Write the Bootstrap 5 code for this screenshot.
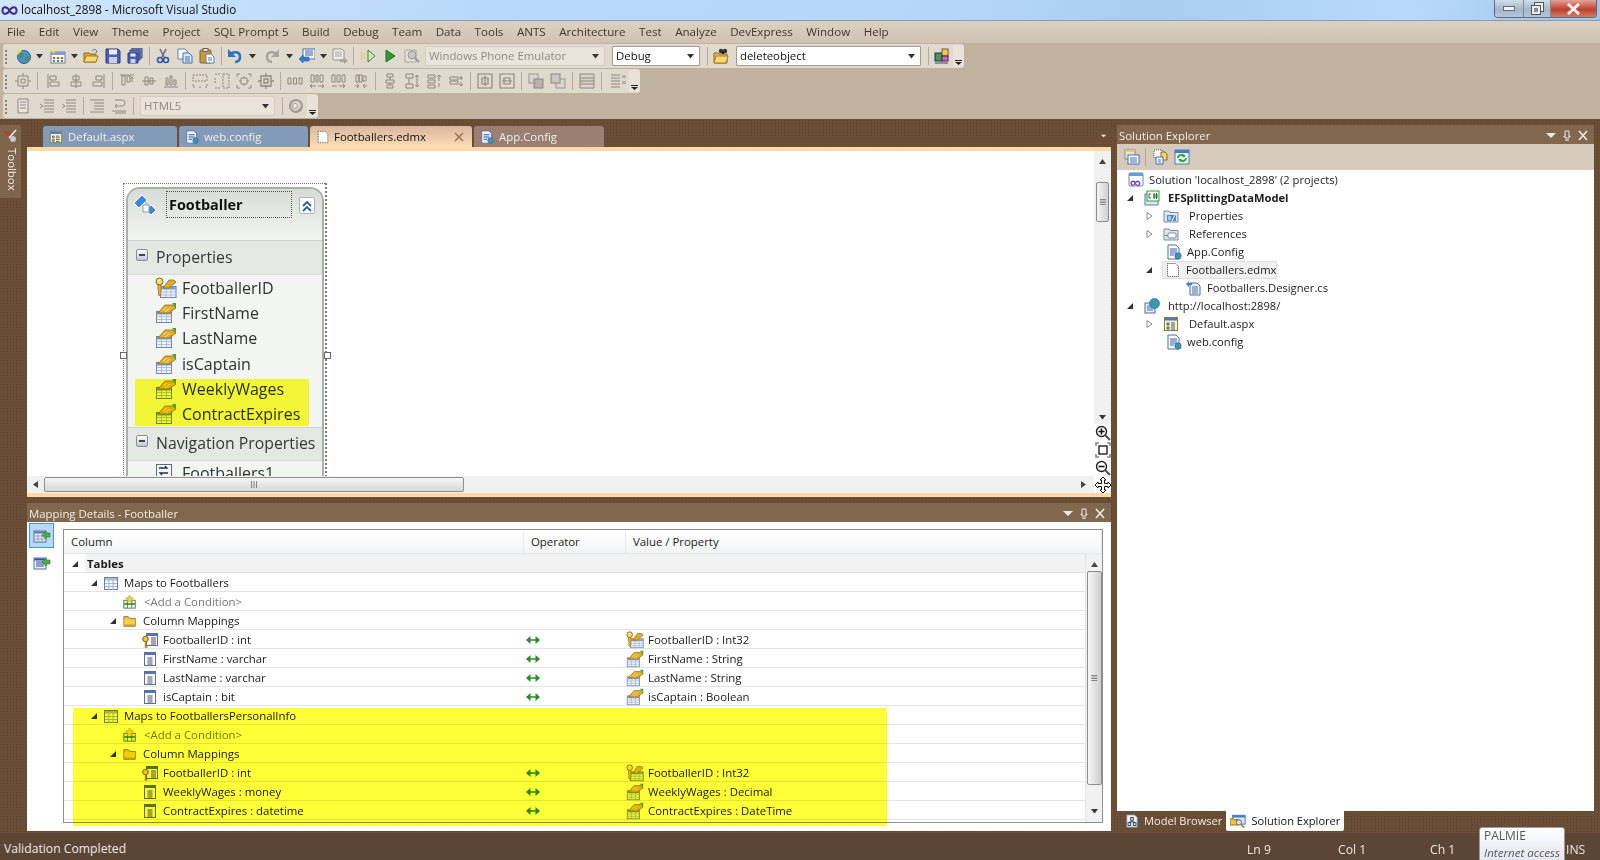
<!DOCTYPE html>
<html lang="en">
<head>
<meta charset="UTF-8">
<title>localhost_2898 - Microsoft Visual Studio</title>
<link href="https://cdn.jsdelivr.net/npm/bootstrap@5.3.0/dist/css/bootstrap.min.css" rel="stylesheet">
<style>
html, body { margin: 0; height: 860px; overflow: hidden; }
body { width: 1600px; font-family: "Open Sans", "Liberation Sans", sans-serif; font-size: 11.4px; line-height: 1; color: #111; background: #6a4e36; }
.dots { background-color: #6a4e36; background-image: radial-gradient(#5c432e 0.8px, transparent 0.9px); background-size: 3px 3px; }
svg { display: block; flex: none; }
.i16 { width: 16px; height: 16px; }
.i18 { width: 18px; height: 18px; }
.i14 { width: 14px; height: 14px; }
.i22 { width: 22px; height: 22px; }
.tri { width: 8px; height: 8px; }
.g { fill: none; stroke: #8d8880; stroke-width: 1; }

/* title + menu */
.titlebar { height: 21px; background: linear-gradient(100deg, #cfe5fb 0, #b9d9fa 30%, #b5d6f8 60%, #a9cdef 72%, #b8d9fb 88%, #9fc4e6 100%); border-bottom: 1px solid #8c9aa8; font-size: 11.7px; padding-left: 21px; position: relative; color: #101010; }
.vslogo { position: absolute; left: 1px; top: 6px; width: 17px; height: 9px; }
.winbtns { position: absolute; left: 1494px; top: 0; width: 103px; height: 18px; border: 1px solid #5d6b7a; border-top: 0; border-radius: 0 0 4px 4px; overflow: hidden; }
.winbtns > div { height: 100%; }
.wb-min { width: 29px; background: linear-gradient(#d2deea, #a3b6ca 55%, #b4c5d6); border-right: 1px solid #7b8a99; }
.wb-res { width: 27px; background: linear-gradient(#d2deea, #a3b6ca 55%, #b4c5d6); border-right: 1px solid #7b8a99; }
.wb-cls { flex: 1; background: linear-gradient(#e2a599, #c2402c 55%, #cf7a69); }
.menubar { height: 22px; background: linear-gradient(#dcd1c4, #cfc2b3); color: #43352a; font-size: 11.6px; padding-left: 7px; gap: 13.5px; }

/* toolbars */
.toolarea { height: 76px; background: #c1b2a0; padding: 1px 0 0 3px; }
.bar { height: 24px; margin-bottom: 1px; background: #e0d9ce; border-radius: 3px; width: max-content; }
.grip { width: 8px; height: 16px; background-image: radial-gradient(#8a8073 1px, transparent 1.1px); background-size: 4px 4px; background-position: 0 1px; background-repeat: repeat-y; margin-left: 1px; }
.tb { width: 22px; height: 22px; justify-content: center; }
.dd { width: 11px; }
.dd svg, .ov svg { width: 7px; height: 5px; }
.ddw { width: 13px; }
.sep { width: 6px; display: flex; justify-content: center; }
.sep::before { content: ""; width: 1px; height: 18px; background: #b4aa9c; }
.sepn { width: 4px; }
.bar2 .sep { width: 7px; }
.ov { width: 11px; height: 22px; justify-content: center; align-items: flex-end !important; padding-bottom: 2px; background: #e8e2d9; border-radius: 0 3px 3px 0; }
.combo { height: 20px; background: #e9e3da; border: 1px solid #d3cbbf; color: #8f8a83; font-size: 11.4px; padding: 0 5px 0 3px; border-radius: 1px; }
.combo.on { background: #fff; border-color: #a99c8c; color: #111; }
.w180 { width: 180px; } .w90 { width: 88px; } .w185 { width: 185px; } .w135 { width: 135px; }
.ms2px { margin-left: 2px; } .ms7px { margin-left: 7px; }

/* workspace */
.workspace { height: 714px; }
.toolbox { width: 27px; padding-top: 6px; }
.toolbox-tab { width: 21px; height: 73px; background: #7e654b; border-radius: 0 2px 2px 0; color: #f1ece6; }
.toolbox-tab span { writing-mode: vertical-rl; font-size: 11.4px; margin-top: 5px; margin-left: 3px; }
.center { width: 1084px; }
.tabstrip { height: 28px; padding: 7px 0 0 16px; gap: 2px; position: relative; }
.doctab { height: 21px; border-radius: 3px 3px 0 0; color: #f3efea; font-size: 11.4px; padding-left: 6px; gap: 5px; }
.t-blue { background: #839ab9; }
.t-peach { background: linear-gradient(#d9b6a0, #fcdcb4); color: #111; }
.t-mauve { background: #9b7f73; }
.w134 { width: 134px; } .w129 { width: 129px; } .w162 { width: 162px; } .w130 { width: 130px; }
.tabmenu { position: absolute; left: 1072px; top: 14px; }
.docpane { height: 350px; border-top: 4px solid #fcd9a8; border-bottom: 4px solid #fcd9a8; background: #fff; overflow: hidden; }
.canvas { flex: 1; position: relative; overflow: hidden; }
.vscroll { width: 17px; background: #f0f0f0; }
.hscroll { height: 17px; background: #f1f1f1; padding: 0 8px 0 6px; flex: none; }
.thumb-h { width: 420px; height: 15px; margin-left: 6px; background: linear-gradient(#f6f6f6, #d7d7d7); border: 1px solid #8e8e8e; border-radius: 2px; font-size: 9px; color: #666; text-align: center; line-height: 13px; }
.thumb-v { background: linear-gradient(90deg, #f6f6f6, #cfcfd1); border: 1px solid #8c8c8c; border-radius: 2px; font-size: 12px; color: #666; }
.thumb-doc { width: 13px; height: 40px; margin-top: 18px; }
.thumb-map { width: 15px; height: 214px; margin-top: 4px; }
.zoomcol { width: 17px; height: 69px; background: #fff; padding-top: 1px; gap: 1.400px; }

/* entity on the designer canvas */
.entity { position: absolute; left: 99px; top: 36px; width: 198px; height: 340px; background: #f2f5f1; border: 2px solid #a8b0a8; border-radius: 14px 14px 0 0; }
.selbox { position: absolute; left: 96px; top: 32px; width: 204px; height: 330px; border: 1px dotted #777; border-right-width: 2px; }
.handle { position: absolute; width: 7px; height: 7px; background: #fff; border: 1px solid #666; top: 201px; }
.handle-l { left: 93px; } .handle-r { left: 297px; }
.ent-head { height: 52px; background: linear-gradient(#d6ddd5, #f3f5f2); border-bottom: 1px solid #c9d1c9; border-radius: 12px 12px 0 0; position: relative; }
.ent-name { position: absolute; left: 38px; top: 2px; width: 126px; height: 27px; border: 1px dotted #555; font-size: 14.4px; font-weight: 700; padding: 6px 2px; color: #111; }
.ent-icon { position: absolute; left: 6px; top: 5px; }
.ent-coll { position: absolute; left: 171px; top: 8px; width: 16px; height: 17px; border: 1px solid #a8b4c8; border-radius: 2px; background: #fff; }
.ent-sec { height: 34px; background: #e3e9e2; border-bottom: 1px solid #d7ddd6; font-size: 15.8px; padding: 0 0 0 8px; gap: 8px; color: #33383a; }
.ent-sec.b { border-top: 1px solid #c9d1c9; }
.minus { width: 12px; height: 12px; border: 1px solid #8c8f95; border-radius: 2px; background: linear-gradient(#fff, #bfc4cc); margin-top: -5px; position: relative; }
.minus::after { content: ""; position: absolute; left: 2px; right: 2px; top: 4px; height: 2px; background: #444; }
.ent-row { height: 25.3px; padding-left: 27px; gap: 5px; font-size: 16px; color: #2e3234; }
.hl { position: absolute; background: #ffff38; mix-blend-mode: multiply; pointer-events: none; }
.hl-ent { left: 108px; top: 228px; width: 174px; height: 47px; }

/* docked tool windows */
.gapv { height: 6px; }
.paneltitle { height: 19px; background: #80674d; color: #f3ede6; font-size: 11.4px; padding: 2px 6px 0 2px; }
.paneltitle .ctl { gap: 6px; }
.paneltitle .ctl svg { width: 10px; height: 11px; }
.mapbody { height: 309px; background: #fff; padding: 7px 8px 8px 0; position: relative; }
.mapside { width: 36px; padding-left: 2px; margin-top: -6px; }
.sidebtn { width: 25px; height: 25px; justify-content: center; }
.sidebtn.on { background: #b8d9f6; border: 1px solid #3d97e3; }
.sidebtn.sec { margin-top: 2px; }
.grid { width: 1040px; height: 294px; border: 1px solid #8f8f8f; }
.ghead { height: 24px; background: linear-gradient(#fff 15%, #f3f4f6); border-bottom: 1px solid #e6e6e6; color: #222; font-size: 11.4px; padding-top: 1px; }
.ghead > div { padding-left: 7px; height: 100%; border-right: 1px solid #e8e8e8; }
.c1 { width: 460px; } .c2 { width: 102px; } .c3 { flex: 1; }
.gbody { height: 269px; }
.grows { flex: 1; overflow: hidden; }
.gscroll { width: 17px; background: #f1f1f1; border-left: 1px solid #e4e4e4; }
.grow { height: 19px; border-bottom: 1px solid #e4e4e4; color: #1a1a1a; padding-top: 2px; }
.cell1 { width: 460px; height: 100%; gap: 5px; }
.cell2 { width: 102px; padding-left: 1px; }
.cell3 { gap: 4px; }
.exp { width: 8px; height: 8px; }
.lv0 { padding-left: 7px; font-weight: 700; }
.lv0 .lbl { margin-left: 3px; }
.grow.tables { background: linear-gradient(90deg, #fff 21px, #f2f2f2 21px); }
.lv1 { padding-left: 26px; }
.lv2 { padding-left: 45px; gap: 6px; }
.lv2 .i14 { margin-left: 0; }
.lv2b { padding-left: 59px; gap: 7px; }
.lv3 { padding-left: 78px; }
.muted { color: #777; }
.hl-map { left: 46px; top: 186px; width: 814px; height: 118px; }

/* solution explorer */
.solution { width: 477px; margin-left: 6px; margin-top: 6px; }
.setools { height: 26px; background: #d6cabd; padding-left: 4px; }
.setools .tb { width: 21px; }
.setree { height: 641px; background: #fff; padding-top: 1px; }
.tr { height: 18px; gap: 5px; color: #1c1c1c; font-size: 11.2px; }
.t0 { padding-left: 11px; }
.t1 { padding-left: 9px; gap: 10px; }
.t1 > span { margin-left: -2px; }
.t2 { padding-left: 28px; gap: 10px; }
.t2n { padding-left: 49px; }
.t3 { padding-left: 69px; }
.picked { background: #f0f0f0; border: 1px solid #dedede; border-radius: 2px; height: 18px; padding: 0 3px 0 2px; width: 115px; margin-left: -1px; gap: 5px; }
.bottomtabs { height: 20px; }
.btab { height: 20px; padding: 0 4px; gap: 5px; color: #f3ede6; font-size: 11.1px; border-radius: 0 0 2px 2px; }
.btab.on { background: #fff; color: #111; }

/* status */
.statusbar { height: 27px; background: #5c4535; color: #efe9e2; font-size: 12.2px; position: relative; padding-left: 4px; padding-top: 10px; }
.stat { position: absolute; top: 11px; }
.st-ln { left: 1247px; } .st-col { left: 1338px; } .st-ch { left: 1430px; } .st-ins { left: 1566px; }
.net { position: absolute; left: 1479px; top: -6px; width: 86px; height: 40px; background: linear-gradient(#fff, #dfe3ef); border: 1px solid #9a9a9a; border-radius: 3px; padding: 2px 4px; color: #575757; font-size: 12px; }
.net i { display: block; margin-top: 5px; white-space: nowrap; font-size: 11.6px; }
</style>
</head>
<body>

<svg width="0" height="0" class="position-absolute">
  <defs>
    <symbol id="exp" viewBox="0 0 8 8"><path d="M7 1v6H1z" fill="#333"/></symbol>
    <symbol id="col" viewBox="0 0 8 8"><path d="M2 0.5l5 3.5-5 3.5z" fill="#fff" stroke="#8a8a8a"/></symbol>
    <symbol id="down" viewBox="0 0 7 5"><path d="M0 0h7L3.5 4.5z" fill="#333"/></symbol>
    <symbol id="ovf" viewBox="0 0 7 5"><path d="M0 0h7v1H0zM0 2h7L3.5 5z" fill="#222"/></symbol>
    <symbol id="pdown" viewBox="0 0 10 11"><path d="M0 3h10L5 8z" fill="#efe9e1"/></symbol>
    <symbol id="pin" viewBox="0 0 10 11"><path d="M3 1h4v5h1v1H6v4H4V7H2V6h1z" fill="none" stroke="#efe9e1"/></symbol>
    <symbol id="pclose" viewBox="0 0 10 11"><path d="M1 1l8 9M9 1l-8 9" stroke="#efe9e1" stroke-width="1.6"/></symbol>

    <!-- coloured toolbar icons -->
    <symbol id="globe" viewBox="0 0 16 16"><circle cx="9" cy="9" r="6.5" fill="#4a8fd6" stroke="#2e5f94"/><path d="M5 5c3-1 4 1 3 3s-3 1-4 3M10 9c2-1 4 0 4 1s-2 4-3 3-2-3-1-4z" fill="#3f9a3a"/><path d="M3.5 0l1 2.5L7 3.5 4.5 4.5l-1 2.5-1-2.5L0 3.5l2.5-1z" fill="#f6dd4a"/></symbol>
    <symbol id="additem" viewBox="0 0 16 16"><rect x="1" y="4" width="14" height="11" fill="#fff" stroke="#6a7fa0"/><path d="M1 4h14v3H1z" fill="#7da0cf"/><path d="M3 9h2v2H3zM7 9h2v2H7zM11 9h2v2h-2z" fill="#d6433a"/><path d="M3 12h2v2H3zM7 12h2v2H7zM11 12h2v2h-2z" fill="#3e9a4a"/><path d="M3.5 0l1 2L7 3 4.5 4l-1 2-1-2L0 3l2.5-1z" fill="#f6dd4a"/></symbol>
    <symbol id="open" viewBox="0 0 16 16"><path d="M1 5h5l1 1h6v8H1z" fill="#d9a93a" stroke="#8c6a1a"/><path d="M3 8h12l-2 6H1z" fill="#f5d778" stroke="#a47f22"/><path d="M9 3c2-2 3-2 5 0l-1 2" fill="none" stroke="#2e6db5"/></symbol>
    <symbol id="save" viewBox="0 0 16 16"><path d="M1 1h12l2 2v12H1z" fill="#4a5fb0" stroke="#2a3a7c"/><rect x="4" y="1.500" width="8" height="5" fill="#e8eefc"/><rect x="4" y="9" width="8" height="6" fill="#c8d0e6"/></symbol>
    <symbol id="saveall" viewBox="0 0 16 16"><path d="M5 0h10v10H5z" fill="#7d8cc6" stroke="#3a4a8a"/><path d="M3 2h10v10H3z" fill="#5d70b8" stroke="#3a4a8a"/><path d="M1 5h10v10H1z" fill="#4a5fb0" stroke="#2a3a7c"/><rect x="3.500" y="5.500" width="5" height="3" fill="#e8eefc"/><rect x="3.500" y="11" width="5" height="4" fill="#c8d0e6"/></symbol>
    <symbol id="cut" viewBox="0 0 16 16"><path d="M5 1l4 8M11 1L7 9" stroke="#667" stroke-width="1.500"/><circle cx="5" cy="12" r="2.500" fill="none" stroke="#2f57a8" stroke-width="1.600"/><circle cx="11" cy="12" r="2.500" fill="none" stroke="#2f57a8" stroke-width="1.600"/></symbol>
    <symbol id="copy" viewBox="0 0 16 16"><path d="M1 1h7l2 2v8H1z" fill="#fff" stroke="#5a7cae"/><path d="M6 5h6l3 3v7H6z" fill="#dbe8f8" stroke="#4a6ea4"/><path d="M8 9h5M8 11h5M8 13h5" stroke="#4a6ea4"/></symbol>
    <symbol id="paste" viewBox="0 0 16 16"><rect x="1" y="2" width="11" height="13" rx="1" fill="#c99a3a" stroke="#80601c"/><rect x="4" y="0.500" width="5" height="3" fill="#ddd" stroke="#666"/><path d="M7 6h5l3 3v6H7z" fill="#fff" stroke="#5a7cae"/><path d="M9 10h4M9 12h4" stroke="#5a7cae"/></symbol>
    <symbol id="undo" viewBox="0 0 16 16"><path d="M3 7c3-4 10-4 10 2 0 3-2 5-5 5" fill="none" stroke="#2f6fc0" stroke-width="2.600"/><path d="M1 1v8h8z" fill="#2f6fc0"/></symbol>
    <symbol id="redo" viewBox="0 0 16 16"><path d="M13 7C10 3 3 3 3 9c0 3 2 5 5 5" fill="none" stroke="#a8a49d" stroke-width="2.400"/><path d="M15 1v8H7z" fill="#a8a49d"/></symbol>
    <symbol id="nav" viewBox="0 0 16 16"><rect x="4" y="1" width="12" height="10" fill="#fff" stroke="#3f6fb0"/><path d="M6 3h8M6 5h8M6 7h8" stroke="#2f57a8"/><path d="M0 11l4-4v2h6v4H4v2z" fill="#2f7fd0" stroke="#1f5a9c" stroke-width=".6"/></symbol>
    <symbol id="findg" viewBox="0 0 16 16"><path d="M1 1h9l2 2v9H1z" fill="#eee" stroke="#9a968f"/><path d="M3 4h7M3 6h7M3 8h7" stroke="#aaa69f"/><path d="M8 11h4V9l4 4-4 3v-2H8z" fill="#aaa69f"/></symbol>
    <symbol id="rundash" viewBox="0 0 16 16"><path d="M8 2l7 6-7 6z" fill="#d5e8c6" stroke="#2f8a2f"/><path d="M0 5h2M0 8h4M0 11h2M3 6h3M3 10h3" stroke="#d9c94a"/></symbol>
    <symbol id="play" viewBox="0 0 16 16"><path d="M4 2l9 6-9 6z" fill="#2f9a2f" stroke="#1e6f1e"/></symbol>
    <symbol id="attach" viewBox="0 0 16 16"><rect x="1" y="2" width="11" height="12" fill="#e4e0d9" stroke="#aaa59d"/><circle cx="8" cy="7" r="4" fill="#c9c6c0" stroke="#999"/><path d="M11 10l4 4" stroke="#999" stroke-width="2"/></symbol>
    <symbol id="findfiles" viewBox="0 0 16 16"><path d="M1 5h4l1 1h8v9H1z" fill="#e6bd55" stroke="#8c6a1a"/><path d="M3 8h12l-2 7H1z" fill="#f5d778" stroke="#a47f22"/><circle cx="8" cy="3" r="2.200" fill="#333"/><circle cx="12" cy="3" r="2.200" fill="#333"/><path d="M8 4l2 2 2-2" stroke="#333"/></symbol>
    <symbol id="layout" viewBox="0 0 16 16"><rect x="1" y="5" width="7" height="8" fill="#3f9a5a" stroke="#235"/><rect x="8" y="1" width="6" height="7" fill="#f0d03a" stroke="#654"/><rect x="8" y="8" width="6" height="5" fill="#d860c8" stroke="#424"/><path d="M1 15h13" stroke="#777" stroke-width="1.500"/></symbol>
    <symbol id="gear" viewBox="0 0 16 16"><circle cx="8" cy="8" r="6" fill="#dcd7cf" stroke="#9e9a93" stroke-width="2"/><circle cx="7" cy="8" r="2.500" fill="#efebe5" stroke="#9e9a93"/><path d="M9 14l5-5" stroke="#9e9a93" stroke-width="2"/></symbol>

    <!-- entity and grid icons -->
    <symbol id="prop" viewBox="0 0 22 22"><rect x="1.500" y="9.500" width="15" height="11" fill="#eef3fb" stroke="#6f87ad"/><path d="M2 10h14v2.500H2z" fill="#7da2d2"/><path d="M1.500 14.500h15M1.500 17.500h15M6.500 12v8M11.500 12v8" stroke="#9fb2ce" stroke-width=".8"/><path d="M3 11l7-8h8l3 3-7 5z" fill="#e0ae2a" stroke="#8b6a14" stroke-width=".8"/><path d="M8 8l4-3M10 10l5-4" stroke="#f8e08a"/><path d="M17 1h4v5z" fill="#3da53a"/></symbol>
    <symbol id="keyprop" viewBox="0 0 22 22"><rect x="5.500" y="9.500" width="15.500" height="11" fill="#eef3fb" stroke="#6f87ad"/><path d="M6 10h15v2.500H6z" fill="#7da2d2"/><path d="M6 15h15M6 18h15M11 12v8M16 12v8" stroke="#9fb2ce" stroke-width=".8"/><path d="M8 11l6-8h5l2 2-7 6z" fill="#e0ae2a" stroke="#8b6a14" stroke-width=".8"/><circle cx="4.500" cy="4.500" r="3.500" fill="#f4d862" stroke="#8b6a14"/><circle cx="4" cy="3.500" r="1" fill="#fff"/><path d="M3 8h3v9l-1.500 2L3 17l1-1-1-1 1-1-1-1z" fill="#e8bc3a" stroke="#8b6a14" stroke-width=".8"/></symbol>
    <symbol id="footnav" viewBox="0 0 22 22"><rect x="1.500" y="2.500" width="15" height="15" fill="#f6f8fb" stroke="#5a6b88"/><path d="M4 6h8l-2-2M13 11H5l2 2" fill="none" stroke="#234" stroke-width="1.300"/><path d="M14 15a4 4 0 1 0 5 5" fill="none" stroke="#2f7fd0" stroke-width="1.600"/></symbol>
    <symbol id="entity" viewBox="0 0 22 22"><path d="M0 9l8-8 5 5-8 8z" fill="#3f86d8" stroke="#fff"/><path d="M12 16l5-5 5 5-5 5z" fill="#3f86d8" stroke="#fff"/><path d="M9 11h6v7H9z" fill="#fff" stroke="#8a9aa8"/><path d="M11 7l3 3h-3z" fill="#9ac2ec"/></symbol>
    <symbol id="chev" viewBox="0 0 14 14"><path d="M3 7l4-4 4 4M3 12l4-4 4 4" fill="none" stroke="#2c5aa0" stroke-width="1.800"/></symbol>
    <symbol id="maptbl" viewBox="0 0 16 16"><rect x="1.500" y="2.500" width="13" height="12" fill="#f4f7fc" stroke="#6b7fa0"/><path d="M2 3h12v2.500H2z" fill="#a6bcd9"/><path d="M2 8.500h12M2 11.500h12M5.800 5v10M10 5v10" stroke="#a6b6cf"/></symbol>
    <symbol id="cond" viewBox="0 0 16 16"><rect x="1" y="6" width="13" height="9" fill="#fff" stroke="#4a6a4a"/><path d="M1 9h13v2.500H1z" fill="#42b042"/><path d="M5 6v9M10 6v9" stroke="#4a6a4a"/><path d="M7.500 0l1.500 3 3 .5-2.200 2 .6 3-2.900-1.500-2.900 1.500.6-3-2.200-2 3-.5z" fill="#f4d53a" stroke="#a88a14" stroke-width=".6"/></symbol>
    <symbol id="folder" viewBox="0 0 16 16"><path d="M1 3h5l1.500 2H14v9H1z" fill="#eebf3a" stroke="#8c6f1c"/><path d="M1.500 6h12v7.500h-12z" fill="#f3cf4e"/><path d="M1.500 12h12v1.500h-12z" fill="#c9982a"/></symbol>
    <symbol id="column" viewBox="0 0 16 16"><rect x="2.500" y="1.500" width="11" height="13" fill="#f6f8fc" stroke="#5d6f8f"/><path d="M3 2h10v2H3z" fill="#4f78b8"/><path d="M5.500 7h5M5.500 9h5M5.500 11h5M5.500 13h5" stroke="#556"/></symbol>
    <symbol id="keycol" viewBox="0 0 16 16"><rect x="4.500" y="1.500" width="11" height="12" fill="#f6f8fc" stroke="#5d6f8f"/><path d="M5 2h10v2H5z" fill="#4f78b8"/><path d="M9 6h5M9 8h5M9 10h5M9 12h5" stroke="#556"/><circle cx="3.500" cy="7" r="2.800" fill="#eec53e" stroke="#7b5f12"/><path d="M3.500 9.500v6l2-1" fill="none" stroke="#b58d1c" stroke-width="1.400"/></symbol>
    <symbol id="arrows" viewBox="0 0 16 10"><path d="M2 5h12" stroke="#2b8a2b" stroke-width="1.500"/><path d="M5.500 1L1 5l4.500 4zM10.500 1L15 5l-4.500 4z" fill="#2b8a2b"/></symbol>
    <symbol id="sidea" viewBox="0 0 18 16"><rect x="1" y="3" width="12" height="11" fill="#eef2fa" stroke="#4f6e9c"/><path d="M1.500 3.500h11v2h-11z" fill="#4f78b8"/><path d="M1 8h12M1 11h12M5 6v8M9 6v8" stroke="#8fa3c4"/><path d="M9 7l4-4v2h4v4h-4v2z" fill="#4caf3e" stroke="#2e7a2a" stroke-width=".6"/></symbol>
    <symbol id="sideb" viewBox="0 0 18 16"><rect x="1" y="3" width="12" height="11" fill="#eef2fa" stroke="#4f6e9c"/><path d="M1.500 3.500h11v2h-11z" fill="#2e4fa8"/><path d="M3 7h8M3 9h8M3 11h8" stroke="#2e4fa8"/><path d="M9 7l4-4v2h4v4h-4v2z" fill="#4caf3e" stroke="#2e7a2a" stroke-width=".6"/></symbol>

    <!-- solution explorer icons -->
    <symbol id="sln" viewBox="0 0 16 16"><rect x="1" y="1" width="14" height="13" rx="1" fill="#fff" stroke="#6a86b0"/><path d="M1 1h14v3H1z" fill="#6f9ad4"/><path d="M4 13a2 2 0 1 1 3-2c1 2 2 3 4 2a2 2 0 1 0-3-3c-1 2-2 4-4 3z" fill="none" stroke="#6a3fb0" stroke-width="1.300"/></symbol>
    <symbol id="csproj" viewBox="0 0 16 16"><rect x="1" y="4" width="13" height="11" fill="#d9e8f5" stroke="#5a7fa8"/><rect x="3" y="1" width="12" height="10" fill="#fff" stroke="#2f9a3a"/><path d="M7 4H5v4h2M10 3v6M12.500 3v6M9 5h5M9 7h5" fill="none" stroke="#1e7a28"/></symbol>
    <symbol id="propsf" viewBox="0 0 16 16"><path d="M1 3h5l1 1.500h8V14H1z" fill="#dfe6ef" stroke="#7f8b9b"/><path d="M4 7h9v6H4z" fill="#4f8ad0"/><path d="M5 9h3M5 11h3M12 7l-3 6" stroke="#fff"/></symbol>
    <symbol id="refsf" viewBox="0 0 16 16"><path d="M1 3h5l1 1.500h8V14H1z" fill="#dfe6ef" stroke="#7f8b9b"/><rect x="5" y="7" width="8" height="5" rx="1" fill="#fff" stroke="#7c8698"/><path d="M2 9.500h3" stroke="#3a6"/></symbol>
    <symbol id="cfg" viewBox="0 0 16 16"><path d="M2 1h8l3 3v11H2z" fill="#fff" stroke="#4f6e9c"/><path d="M4 5h7M4 7h7M4 9h7M4 11h4" stroke="#2f5fa8"/><circle cx="12" cy="12" r="3.200" fill="#3c8fd8" stroke="#1f5f9c" stroke-width=".6"/><path d="M10 12c1-2 3-1 3 0s-1 1 0 3" fill="#44a83a"/></symbol>
    <symbol id="edmx" viewBox="0 0 16 16"><path d="M2.500 1.500h8l3 3v10h-11z" fill="#fff" stroke="#444" stroke-dasharray="1 1"/></symbol>
    <symbol id="designer" viewBox="0 0 16 16"><path d="M4 3h7l3 3v9H4z" fill="#eef3fb" stroke="#4f6e9c"/><path d="M6 7h6M6 9h6M6 11h6M6 13h6" stroke="#4f6e9c"/><path d="M0 4l3-3v2h3v2H3v2z" fill="#3c86d0"/></symbol>
    <symbol id="aspx" viewBox="0 0 16 16"><rect x="1.500" y="1.500" width="13" height="13" fill="#fdf4c4" stroke="#8a7a3a"/><path d="M2 2h12v2.500H2z" fill="#4f78b8"/><path d="M4 7h2v2H4zM4 11h2v2H4zM8 7h4M8 9h4M8 11h4M8 13h4" stroke="#3a5a8a" fill="none"/></symbol>
    <symbol id="webproj" viewBox="0 0 16 16"><rect x="1" y="5" width="10" height="10" fill="#e6eef8" stroke="#4f6e9c"/><path d="M3 8h6M3 10h6M3 12h6" stroke="#4f6e9c"/><circle cx="10.500" cy="5.500" r="5" fill="#3c8fd8" stroke="#1f5f9c" stroke-width=".6"/><path d="M7 4c2-2 4-1 4 1s-2 1-3 3zM12 8c1-1 3-2 3-1s-1 2-2 2z" fill="#44a83a"/></symbol>
    <symbol id="showall" viewBox="0 0 16 16"><rect x="1" y="1" width="10" height="9" fill="#e9e4da" stroke="#8c867c"/><path d="M1 1h10v2H1z" fill="#e9c87a"/><rect x="4" y="6" width="11" height="9" fill="#fff" stroke="#3f6fb0"/><path d="M6 9h7M6 11h7M6 13h7" stroke="#3f6fb0"/></symbol>
    <symbol id="nest" viewBox="0 0 16 16"><path d="M1 1h8v8H1z" fill="#fff" stroke="#555" stroke-dasharray="1 1"/><path d="M8 3h4l2 2v6H8z" fill="#f3d27a" stroke="#8a6a1a"/><path d="M3 8h7v7H3z" fill="#fff" stroke="#3f6fb0"/><path d="M5 11h3M5 13h3" stroke="#3f6fb0"/></symbol>
    <symbol id="refresh" viewBox="0 0 16 16"><rect x="1" y="1" width="14" height="14" fill="#dff0fa" stroke="#4f7fb0"/><path d="M1 1h14v3H1z" fill="#3f7fc8"/><path d="M4 9c0-3 4-4 6-2M12 9c0 3-4 4-6 2" fill="none" stroke="#3a9a2a" stroke-width="1.600"/><path d="M10 5l1.500 3L8 8zM6 13l-1.500-3L8 10z" fill="#3a9a2a"/></symbol>
    <symbol id="modelb" viewBox="0 0 16 16"><path d="M2 1h9l3 3v11H2z" fill="#f2f6fc" stroke="#6f87ad"/><rect x="6.500" y="4" width="3" height="3" fill="none" stroke="#234"/><rect x="3.500" y="10" width="3" height="3" fill="none" stroke="#234"/><rect x="9.500" y="10" width="3" height="3" fill="none" stroke="#234"/><path d="M8 7v2M5 10V9h6v1" fill="none" stroke="#234"/></symbol>
    <symbol id="solx" viewBox="0 0 18 16"><rect x="3" y="1" width="14" height="10" fill="#dbe8f8" stroke="#3f6fb0"/><path d="M3 1h14v2.500H3z" fill="#3f7fc8"/><path d="M0 5h4l1 1h4v6H0z" fill="#eec53e" stroke="#8c6a1a"/><circle cx="10" cy="9" r="3" fill="#cfe4f7" stroke="#555"/><path d="M12 11l4 4" stroke="#b08a20" stroke-width="2"/></symbol>

    <!-- designer zoom controls -->
    <symbol id="zin" viewBox="0 0 16 16"><circle cx="6.500" cy="6.500" r="5" fill="#fff" stroke="#222" stroke-width="1.400"/><path d="M3.500 6.500h6M6.500 3.500v6" stroke="#111" stroke-width="1.600"/><path d="M10 10l5 5" stroke="#555" stroke-width="2.200"/></symbol>
    <symbol id="zout" viewBox="0 0 16 16"><circle cx="6.500" cy="6.500" r="5" fill="#fff" stroke="#222" stroke-width="1.400"/><path d="M3.500 6.500h6" stroke="#111" stroke-width="1.600"/><path d="M10 10l5 5" stroke="#555" stroke-width="2.200"/></symbol>
    <symbol id="zfit" viewBox="0 0 16 16"><path d="M1 4V1h3M12 1h3v3M15 12v3h-3M4 15H1v-3" fill="none" stroke="#888" stroke-width="1.600"/><rect x="4" y="4" width="8" height="8" fill="#fff" stroke="#111" stroke-width="1.300"/></symbol>
    <symbol id="zmove" viewBox="0 0 16 16"><path d="M8 0l3 3H9.500v3.500H13V5l3 3-3 3V9.500H9.500V13H11l-3 3-3-3h1.500V9.500H3V11L0 8l3-3v1.500h3.500V3H5z" fill="#fff" stroke="#111"/></symbol>
  </defs>
</svg>

<div class="titlebar d-flex align-items-center">
  <svg class="vslogo" viewBox="0 0 17 9"><path d="M8.500 4.500C6.500 1 4 1 2.800 1.500 1 2.300 1 6.700 2.800 7.500 4 8 6.500 8 8.500 4.500 10.500 1 13 1 14.200 1.500 16 2.300 16 6.700 14.200 7.500 13 8 10.500 8 8.500 4.500z" fill="none" stroke="#3f2a86" stroke-width="2"/></svg>
  <span>localhost_2898 - Microsoft Visual Studio</span>
  <div class="winbtns d-flex">
    <div class="wb-min d-flex align-items-center justify-content-center"><svg width="12" height="5" viewBox="0 0 12 5"><rect x=".5" y=".5" width="11" height="4" fill="#f3f3f3" stroke="#5d6b7a"/></svg></div>
    <div class="wb-res d-flex align-items-center justify-content-center"><svg width="13" height="13" viewBox="0 0 13 13"><rect x="3.500" y=".5" width="9" height="9" fill="#eee" stroke="#555"/><rect x=".5" y="3.500" width="9" height="9" fill="#eee" stroke="#555"/><rect x="3" y="6" width="4" height="4" fill="#7f8b9b"/></svg></div>
    <div class="wb-cls d-flex align-items-center justify-content-center"><svg width="15" height="12" viewBox="0 0 15 12"><path d="M2 1l11 10M13 1L2 11" stroke="#f4f0ee" stroke-width="3"/></svg></div>
  </div>
</div>

<div class="menubar d-flex align-items-center">
  <span>File</span><span>Edit</span><span>View</span><span>Theme</span><span>Project</span><span>SQL Prompt 5</span><span>Build</span><span>Debug</span><span>Team</span><span>Data</span><span>Tools</span><span>ANTS</span><span>Architecture</span><span>Test</span><span>Analyze</span><span>DevExpress</span><span>Window</span><span>Help</span>
</div>

<div class="toolarea">
  <div class="bar d-flex align-items-center">
    <div class="grip"></div>
    <div class="tb d-flex align-items-center"><svg class="i16"><use href="#globe"/></svg></div>
    <div class="tb dd d-flex align-items-center"><svg><use href="#down"/></svg></div>
    <div class="tb d-flex align-items-center ms2px"><svg class="i16"><use href="#additem"/></svg></div>
    <div class="tb dd d-flex align-items-center"><svg><use href="#down"/></svg></div>
    <div class="tb d-flex align-items-center"><svg class="i16"><use href="#open"/></svg></div>
    <div class="tb d-flex align-items-center"><svg class="i16"><use href="#save"/></svg></div>
    <div class="tb d-flex align-items-center"><svg class="i16"><use href="#saveall"/></svg></div>
    <div class="sep"></div>
    <div class="tb d-flex align-items-center"><svg class="i16"><use href="#cut"/></svg></div>
    <div class="tb d-flex align-items-center"><svg class="i16"><use href="#copy"/></svg></div>
    <div class="tb d-flex align-items-center"><svg class="i16"><use href="#paste"/></svg></div>
    <div class="sep"></div>
    <div class="tb d-flex align-items-center"><svg class="i16"><use href="#undo"/></svg></div>
    <div class="tb ddw d-flex align-items-center"><svg width="7" height="5"><use href="#down"/></svg></div>
    <div class="tb d-flex align-items-center ms2px"><svg class="i16"><use href="#redo"/></svg></div>
    <div class="tb ddw d-flex align-items-center"><svg width="7" height="5"><use href="#down"/></svg></div>
    <div class="tb d-flex align-items-center"><svg class="i16"><use href="#nav"/></svg></div>
    <div class="tb dd d-flex align-items-center"><svg><use href="#down"/></svg></div>
    <div class="tb d-flex align-items-center"><svg class="i16"><use href="#findg"/></svg></div>
    <div class="sep sepn"></div>
    <div class="tb d-flex align-items-center ms2px"><svg class="i16"><use href="#rundash"/></svg></div>
    <div class="tb d-flex align-items-center"><svg class="i16"><use href="#play"/></svg></div>
    <div class="tb d-flex align-items-center"><svg class="i16"><use href="#attach"/></svg></div>
    <div class="combo w180 d-flex align-items-center justify-content-between ms2px"><span>Windows Phone Emulator</span><svg width="7" height="5"><use href="#down"/></svg></div>
    <div class="combo on w90 d-flex align-items-center justify-content-between ms7px"><span>Debug</span><svg width="7" height="5"><use href="#down"/></svg></div>
    <div class="sep ms-1"></div>
    <div class="tb d-flex align-items-center"><svg class="i16"><use href="#findfiles"/></svg></div>
    <div class="combo on w185 d-flex align-items-center justify-content-between ms-1"><span>deleteobject</span><svg width="7" height="5"><use href="#down"/></svg></div>
    <div class="sep ms-1"></div>
    <div class="tb d-flex align-items-center"><svg class="i16"><use href="#layout"/></svg></div>
    <div class="ov d-flex"><svg><use href="#ovf"/></svg></div>
  </div>

  <div class="bar bar2 d-flex align-items-center">
    <div class="grip"></div>
    <div class="tb d-flex align-items-center"><svg class="i16 g" viewBox="0 0 16 16"><path d="M3 3h10v10H3zM8 0v3M8 13v3M0 8h3M13 8h3M6 6h4v4H6z"/></svg></div>
    <div class="sep"></div>
    <div class="tb d-flex align-items-center ms2px"><svg class="i16 g" viewBox="0 0 16 16"><path d="M2 1v14M4 3h6v4H4zM4 9h9v4H4z"/></svg></div>
    <div class="tb d-flex align-items-center"><svg class="i16 g" viewBox="0 0 16 16"><path d="M8 1v14M5 3h6v4H5zM3 9h10v4H3z"/></svg></div>
    <div class="tb d-flex align-items-center"><svg class="i16 g" viewBox="0 0 16 16"><path d="M14 1v14M6 3h6v4H6zM3 9h9v4H3z"/></svg></div>
    <div class="sep"></div>
    <div class="tb d-flex align-items-center"><svg class="i16 g" viewBox="0 0 16 16"><path d="M1 2h14M3 3h3v9H3zM8 3h3v6H8zM13 9V4M11.500 5.500L13 4l1.500 1.500"/></svg></div>
    <div class="tb d-flex align-items-center"><svg class="i16 g" viewBox="0 0 16 16"><path d="M1 8h14M4 4h3v8H4zM9 5h3v6H9z"/></svg></div>
    <div class="tb d-flex align-items-center"><svg class="i16 g" viewBox="0 0 16 16"><path d="M1 14h14M3 5h2v7H3zM7 3h2v9H7zM11 7h2v5h-2z"/></svg></div>
    <div class="sep"></div>
    <div class="tb d-flex align-items-center"><svg class="i16 g" viewBox="0 0 16 16"><path d="M1 2h14v6H1zM1 11v3h3M7 14h3M13 14h2v-3" stroke-dasharray="2 1"/></svg></div>
    <div class="tb d-flex align-items-center"><svg class="i16 g" viewBox="0 0 16 16"><path d="M9 1h6v14H9zM1 1h5M1 15h5M1 5v6" stroke-dasharray="2 1"/></svg></div>
    <div class="tb d-flex align-items-center"><svg class="i16 g" viewBox="0 0 16 16"><path d="M1 4V1h3M12 1h3v3M15 12v3h-3M4 15H1v-3M5 5h6v6H5zM8 3v2M8 11v2M3 8h2M11 8h2"/></svg></div>
    <div class="tb d-flex align-items-center"><svg class="i16 g" viewBox="0 0 16 16"><path d="M3 3h10v10H3zM6 6h4v4H6zM8 0v3M8 13v3M0 8h3M13 8h3" stroke-width="1.300"/></svg></div>
    <div class="sep"></div>
    <div class="tb d-flex align-items-center"><svg class="i16 g" viewBox="0 0 16 16"><path d="M1 5h3v6H1zM6.500 5h3v6h-3zM12 5h3v6h-3z"/></svg></div>
    <div class="tb d-flex align-items-center"><svg class="i16 g" viewBox="0 0 16 16"><path d="M2 2h3v7H2zM7 2h2v7H7zM11 2h3v7h-3zM1 13h6M3 11l-2 2 2 2M15 13H9M13 11l2 2-2 2"/></svg></div>
    <div class="tb d-flex align-items-center"><svg class="i16 g" viewBox="0 0 16 16"><path d="M1 2h3v7H1zM6 2h3v7H6zM11 2h3v7h-3zM1 13h5M8 13h6M12 11l2 2-2 2"/></svg></div>
    <div class="tb d-flex align-items-center"><svg class="i16 g" viewBox="0 0 16 16"><path d="M3 2h3v7H3zM6 2h3v7H6zM10 3h3v5h-3zM2 13h4M10 13h4M4 11l2 2-2 2M12 11l-2 2 2 2"/></svg></div>
    <div class="sep"></div>
    <div class="tb d-flex align-items-center"><svg class="i16 g" viewBox="0 0 16 16"><path d="M5 1h6v3H5zM4 7h8v3H4zM5 12h6v3H5zM8 4v3M8 10v2"/></svg></div>
    <div class="tb d-flex align-items-center"><svg class="i16 g" viewBox="0 0 16 16"><path d="M2 1h7v4H2zM2 11h7v4H2zM13 2v12M11 4l2-2 2 2M11 12l2 2 2-2M5 5v6"/></svg></div>
    <div class="tb d-flex align-items-center"><svg class="i16 g" viewBox="0 0 16 16"><path d="M2 2h7v3H2zM2 7h7v3H2zM2 12h7v3H2zM13 2v6M11 4l2-2 2 2M13 10v4"/></svg></div>
    <div class="tb d-flex align-items-center"><svg class="i16 g" viewBox="0 0 16 16"><path d="M2 4h8v3H2zM2 8h8v3H2zM13 3v4M11 5h4M13 9v4M11 11l2 2 2-2"/></svg></div>
    <div class="sep"></div>
    <div class="tb d-flex align-items-center"><svg class="i16 g" viewBox="0 0 16 16"><path d="M1 1h14v14H1zM8 3v10M5 5h6v6H5z" stroke-width="1.200"/></svg></div>
    <div class="tb d-flex align-items-center"><svg class="i16 g" viewBox="0 0 16 16"><path d="M1 1h14v14H1zM3 8h10M5 5h6v6H5z" stroke-width="1.200"/></svg></div>
    <div class="sep"></div>
    <div class="tb d-flex align-items-center"><svg class="i16" viewBox="0 0 16 16"><rect x="1" y="1" width="9" height="9" fill="#dbd6cd" stroke="#9b958c"/><rect x="6" y="6" width="9" height="9" fill="#b8b3aa" stroke="#8d8880"/></svg></div>
    <div class="tb d-flex align-items-center"><svg class="i16" viewBox="0 0 16 16"><rect x="6" y="6" width="9" height="9" fill="#dbd6cd" stroke="#9b958c"/><rect x="1" y="1" width="9" height="9" fill="#cbc6bd" stroke="#8d8880"/></svg></div>
    <div class="sep"></div>
    <div class="tb d-flex align-items-center"><svg class="i16 g" viewBox="0 0 16 16"><path d="M1 1h14v14H1zM1 5h14M1 8h14M1 11h14" fill="#d9d4cb"/></svg></div>
    <div class="sep"></div>
    <div class="tb d-flex align-items-center ms2px"><svg class="i16 g" viewBox="0 0 16 16"><path d="M1 2h9M1 5h9M1 8h9M1 11h9M1 14h9M13 2v3M15 2v3M13 8v3M15 8v3"/></svg></div>
    <div class="ov d-flex"><svg><use href="#ovf"/></svg></div>
  </div>

  <div class="bar d-flex align-items-center">
    <div class="grip"></div>
    <div class="tb d-flex align-items-center"><svg class="i16 g" viewBox="0 0 16 16"><path d="M3 1h10v14H3zM5 4h6M5 7h6M5 10h6" fill="#e8e3db"/></svg></div>
    <div class="tb d-flex align-items-center ms2px"><svg class="i16 g" viewBox="0 0 16 16"><path d="M5 2h10M5 5h10M5 8h10M5 11h10M5 14h10M4 8L1 6M4 8l-3 2"/></svg></div>
    <div class="tb d-flex align-items-center"><svg class="i16 g" viewBox="0 0 16 16"><path d="M5 2h10M5 5h10M5 8h10M5 11h10M5 14h10M1 6l3 2-3 2"/></svg></div>
    <div class="sep"></div>
    <div class="tb d-flex align-items-center"><svg class="i16 g" viewBox="0 0 16 16"><path d="M1 2h14M5 5h10M5 8h10M5 11h10M1 14h14"/></svg></div>
    <div class="tb d-flex align-items-center"><svg class="i16 g" viewBox="0 0 16 16"><path d="M4 2h7a3 3 0 0 1 0 6H4M6 6L4 8l2 2M1 13h14M4 15h11"/></svg></div>
    <div class="sep"></div>
    <div class="combo w135 d-flex align-items-center justify-content-between ms-1"><span>HTML5</span><svg width="7" height="5"><use href="#down"/></svg></div>
    <div class="sep ms-1"></div>
    <div class="tb d-flex align-items-center"><svg class="i16"><use href="#gear"/></svg></div>
    <div class="ov d-flex"><svg><use href="#ovf"/></svg></div>
  </div>
</div>

<div class="workspace dots d-flex">
  <div class="toolbox">
    <div class="toolbox-tab d-flex flex-column align-items-center pt-1">
      <svg class="i14" viewBox="0 0 14 14"><path d="M1 2l7 6" stroke="#c8303a" stroke-width="2"/><path d="M12 1L5 9" stroke="#eee" stroke-width="1.500"/><circle cx="9" cy="10" r="3" fill="#c8c8c8"/></svg>
      <span>Toolbox</span>
    </div>
  </div>

  <div class="center">
    <div class="tabstrip d-flex">
      <div class="doctab t-blue w134 d-flex align-items-center"><svg class="i14"><use href="#aspx"/></svg><span>Default.aspx</span></div>
      <div class="doctab t-blue w129 d-flex align-items-center"><svg class="i14"><use href="#cfg"/></svg><span>web.config</span></div>
      <div class="doctab t-peach w162 d-flex align-items-center justify-content-between pe-2"><span class="d-flex align-items-center gap-1"><svg class="i14"><use href="#edmx"/></svg>Footballers.edmx</span><svg width="10" height="10" viewBox="0 0 10 10"><path d="M1 1l8 8M9 1L1 9" stroke="#9a7048" stroke-width="1.400"/></svg></div>
      <div class="doctab t-mauve w130 d-flex align-items-center"><svg class="i14"><use href="#cfg"/></svg><span>App.Config</span></div>
      <svg class="tabmenu" width="9" height="6"><use href="#pdown"/></svg>
    </div>

    <div class="docpane d-flex">
      <div class="d-flex flex-column flex-grow-1 overflow-hidden">
        <div class="canvas">
          <div class="selbox"></div>
          <div class="entity">
            <div class="ent-head">
              <svg class="ent-icon i22"><use href="#entity"/></svg>
              <div class="ent-name">Footballer</div>
              <div class="ent-coll d-flex align-items-center justify-content-center"><svg class="i14"><use href="#chev"/></svg></div>
            </div>
            <div class="ent-sec d-flex align-items-center"><div class="minus"></div><span>Properties</span></div>
            <div class="ent-row d-flex align-items-center"><svg class="i22"><use href="#keyprop"/></svg><span>FootballerID</span></div>
            <div class="ent-row d-flex align-items-center"><svg class="i22"><use href="#prop"/></svg><span>FirstName</span></div>
            <div class="ent-row d-flex align-items-center"><svg class="i22"><use href="#prop"/></svg><span>LastName</span></div>
            <div class="ent-row d-flex align-items-center"><svg class="i22"><use href="#prop"/></svg><span>isCaptain</span></div>
            <div class="ent-row d-flex align-items-center"><svg class="i22"><use href="#prop"/></svg><span>WeeklyWages</span></div>
            <div class="ent-row d-flex align-items-center"><svg class="i22"><use href="#prop"/></svg><span>ContractExpires</span></div>
            <div class="ent-sec b d-flex align-items-center"><div class="minus"></div><span>Navigation Properties</span></div>
            <div class="ent-row d-flex align-items-center"><svg class="i22"><use href="#footnav"/></svg><span>Footballers1</span></div>
          </div>
          <div class="handle handle-l"></div>
          <div class="handle handle-r"></div>
          <div class="hl hl-ent"></div>
        </div>
        <div class="hscroll d-flex align-items-center">
          <svg width="5" height="7" viewBox="0 0 5 7"><path d="M5 0v7L0 3.500z" fill="#444"/></svg>
          <div class="thumb-h">III</div>
          <div class="flex-grow-1"></div>
          <svg width="5" height="7" viewBox="0 0 5 7"><path d="M0 0v7l5-3.500z" fill="#444"/></svg>
        </div>
      </div>
      <div class="d-flex flex-column align-items-center">
        <div class="vscroll flex-grow-1 d-flex flex-column align-items-center">
          <svg class="mt-2" width="7" height="5" viewBox="0 0 7 5"><path d="M0 5h7L3.500 0z" fill="#444"/></svg>
          <div class="thumb-v thumb-doc d-flex align-items-center justify-content-center">≡</div>
          <div class="flex-grow-1"></div>
          <svg class="mb-1" width="7" height="5"><use href="#down"/></svg>
        </div>
        <div class="zoomcol d-flex flex-column align-items-center">
          <svg class="i16"><use href="#zin"/></svg>
          <svg class="i16"><use href="#zfit"/></svg>
          <svg class="i16"><use href="#zout"/></svg>
          <svg class="i16"><use href="#zmove"/></svg>
        </div>
      </div>
    </div>

    <div class="gapv"></div>

    <div class="paneltitle d-flex align-items-center justify-content-between">
      <span>Mapping Details - Footballer</span>
      <div class="ctl d-flex"><svg><use href="#pdown"/></svg><svg><use href="#pin"/></svg><svg><use href="#pclose"/></svg></div>
    </div>
    <div class="mapbody d-flex">
      <div class="mapside">
        <div class="sidebtn on d-flex align-items-center"><svg width="18" height="16"><use href="#sidea"/></svg></div>
        <div class="sidebtn sec d-flex align-items-center"><svg width="18" height="16"><use href="#sideb"/></svg></div>
      </div>
      <div class="grid d-flex flex-column">
        <div class="ghead d-flex">
          <div class="c1 d-flex align-items-center">Column</div>
          <div class="c2 d-flex align-items-center">Operator</div>
          <div class="c3 d-flex align-items-center">Value / Property</div>
        </div>
        <div class="gbody d-flex">
          <div class="grows">
            <div class="grow tables d-flex align-items-center"><div class="cell1 lv0 d-flex align-items-center"><svg class="exp"><use href="#exp"/></svg><span class="lbl">Tables</span></div></div>

            <div class="grow d-flex align-items-center"><div class="cell1 lv1 d-flex align-items-center"><svg class="exp"><use href="#exp"/></svg><svg class="i16"><use href="#maptbl"/></svg><span>Maps to Footballers</span></div></div>
            <div class="grow d-flex align-items-center"><div class="cell1 lv2b d-flex align-items-center"><svg class="i14"><use href="#cond"/></svg><span class="muted">&lt;Add a Condition&gt;</span></div></div>
            <div class="grow d-flex align-items-center"><div class="cell1 lv2 d-flex align-items-center"><svg class="exp"><use href="#exp"/></svg><svg class="i14"><use href="#folder"/></svg><span>Column Mappings</span></div></div>
            <div class="grow d-flex align-items-center"><div class="cell1 lv3 d-flex align-items-center"><svg class="i16"><use href="#keycol"/></svg><span>FootballerID : int</span></div><div class="cell2"><svg width="16" height="10"><use href="#arrows"/></svg></div><div class="cell3 d-flex align-items-center"><svg class="i18"><use href="#keyprop"/></svg><span>FootballerID : Int32</span></div></div>
            <div class="grow d-flex align-items-center"><div class="cell1 lv3 d-flex align-items-center"><svg class="i16"><use href="#column"/></svg><span>FirstName : varchar</span></div><div class="cell2"><svg width="16" height="10"><use href="#arrows"/></svg></div><div class="cell3 d-flex align-items-center"><svg class="i18"><use href="#prop"/></svg><span>FirstName : String</span></div></div>
            <div class="grow d-flex align-items-center"><div class="cell1 lv3 d-flex align-items-center"><svg class="i16"><use href="#column"/></svg><span>LastName : varchar</span></div><div class="cell2"><svg width="16" height="10"><use href="#arrows"/></svg></div><div class="cell3 d-flex align-items-center"><svg class="i18"><use href="#prop"/></svg><span>LastName : String</span></div></div>
            <div class="grow d-flex align-items-center"><div class="cell1 lv3 d-flex align-items-center"><svg class="i16"><use href="#column"/></svg><span>isCaptain : bit</span></div><div class="cell2"><svg width="16" height="10"><use href="#arrows"/></svg></div><div class="cell3 d-flex align-items-center"><svg class="i18"><use href="#prop"/></svg><span>isCaptain : Boolean</span></div></div>

            <div class="grow d-flex align-items-center"><div class="cell1 lv1 d-flex align-items-center"><svg class="exp"><use href="#exp"/></svg><svg class="i16"><use href="#maptbl"/></svg><span>Maps to FootballersPersonalInfo</span></div></div>
            <div class="grow d-flex align-items-center"><div class="cell1 lv2b d-flex align-items-center"><svg class="i14"><use href="#cond"/></svg><span class="muted">&lt;Add a Condition&gt;</span></div></div>
            <div class="grow d-flex align-items-center"><div class="cell1 lv2 d-flex align-items-center"><svg class="exp"><use href="#exp"/></svg><svg class="i14"><use href="#folder"/></svg><span>Column Mappings</span></div></div>
            <div class="grow d-flex align-items-center"><div class="cell1 lv3 d-flex align-items-center"><svg class="i16"><use href="#keycol"/></svg><span>FootballerID : int</span></div><div class="cell2"><svg width="16" height="10"><use href="#arrows"/></svg></div><div class="cell3 d-flex align-items-center"><svg class="i18"><use href="#keyprop"/></svg><span>FootballerID : Int32</span></div></div>
            <div class="grow d-flex align-items-center"><div class="cell1 lv3 d-flex align-items-center"><svg class="i16"><use href="#column"/></svg><span>WeeklyWages : money</span></div><div class="cell2"><svg width="16" height="10"><use href="#arrows"/></svg></div><div class="cell3 d-flex align-items-center"><svg class="i18"><use href="#prop"/></svg><span>WeeklyWages : Decimal</span></div></div>
            <div class="grow d-flex align-items-center"><div class="cell1 lv3 d-flex align-items-center"><svg class="i16"><use href="#column"/></svg><span>ContractExpires : datetime</span></div><div class="cell2"><svg width="16" height="10"><use href="#arrows"/></svg></div><div class="cell3 d-flex align-items-center"><svg class="i18"><use href="#prop"/></svg><span>ContractExpires : DateTime</span></div></div>
          </div>
          <div class="gscroll d-flex flex-column align-items-center">
            <svg class="mt-2" width="7" height="5" viewBox="0 0 7 5"><path d="M0 5h7L3.500 0z" fill="#444"/></svg>
            <div class="thumb-v thumb-map d-flex align-items-center justify-content-center">≡</div>
            <div class="flex-grow-1"></div>
            <svg class="mb-2" width="7" height="5"><use href="#down"/></svg>
          </div>
        </div>
      </div>
      <div class="hl hl-map"></div>
    </div>
  </div>

  <div class="solution">
    <div class="paneltitle d-flex align-items-center justify-content-between">
      <span>Solution Explorer</span>
      <div class="ctl d-flex"><svg><use href="#pdown"/></svg><svg><use href="#pin"/></svg><svg><use href="#pclose"/></svg></div>
    </div>
    <div class="setools d-flex align-items-center">
      <div class="tb d-flex align-items-center"><svg class="i16"><use href="#showall"/></svg></div>
      <div class="sep"></div>
      <div class="tb d-flex align-items-center ms2px"><svg class="i16"><use href="#nest"/></svg></div>
      <div class="tb d-flex align-items-center"><svg class="i16"><use href="#refresh"/></svg></div>
    </div>
    <div class="setree">
      <div class="tr t0 d-flex align-items-center"><svg class="i16"><use href="#sln"/></svg><span>Solution 'localhost_2898' (2 projects)</span></div>
      <div class="tr t1 d-flex align-items-center"><svg class="exp"><use href="#exp"/></svg><svg class="i16"><use href="#csproj"/></svg><span class="fw-bold">EFSplittingDataModel</span></div>
      <div class="tr t2 d-flex align-items-center"><svg class="exp"><use href="#col"/></svg><svg class="i16"><use href="#propsf"/></svg><span>Properties</span></div>
      <div class="tr t2 d-flex align-items-center"><svg class="exp"><use href="#col"/></svg><svg class="i16"><use href="#refsf"/></svg><span>References</span></div>
      <div class="tr t2n d-flex align-items-center"><svg class="i16"><use href="#cfg"/></svg><span>App.Config</span></div>
      <div class="tr t2 d-flex align-items-center"><svg class="exp"><use href="#exp"/></svg><div class="picked d-flex align-items-center"><svg class="i16"><use href="#edmx"/></svg><span>Footballers.edmx</span></div></div>
      <div class="tr t3 d-flex align-items-center"><svg class="i16"><use href="#designer"/></svg><span>Footballers.Designer.cs</span></div>
      <div class="tr t1 d-flex align-items-center"><svg class="exp"><use href="#exp"/></svg><svg class="i16"><use href="#webproj"/></svg><span>http://localhost:2898/</span></div>
      <div class="tr t2 d-flex align-items-center"><svg class="exp"><use href="#col"/></svg><svg class="i16"><use href="#aspx"/></svg><span>Default.aspx</span></div>
      <div class="tr t2n d-flex align-items-center"><svg class="i16"><use href="#cfg"/></svg><span>web.config</span></div>
    </div>
    <div class="bottomtabs d-flex">
      <div class="btab d-flex align-items-center ms-1"><svg class="i14"><use href="#modelb"/></svg><span>Model Browser</span></div>
      <div class="btab on d-flex align-items-center"><svg width="16" height="15"><use href="#solx"/></svg><span>Solution Explorer</span></div>
    </div>
  </div>
</div>

<div class="statusbar">
  <span>Validation Completed</span>
  <span class="stat st-ln">Ln 9</span>
  <span class="stat st-col">Col 1</span>
  <span class="stat st-ch">Ch 1</span>
  <span class="stat st-ins">INS</span>
  <div class="net">PALMIE<i>Internet access</i></div>
</div>

<script src="https://cdn.jsdelivr.net/npm/bootstrap@5.3.0/dist/js/bootstrap.bundle.min.js"></script>
</body>
</html>
